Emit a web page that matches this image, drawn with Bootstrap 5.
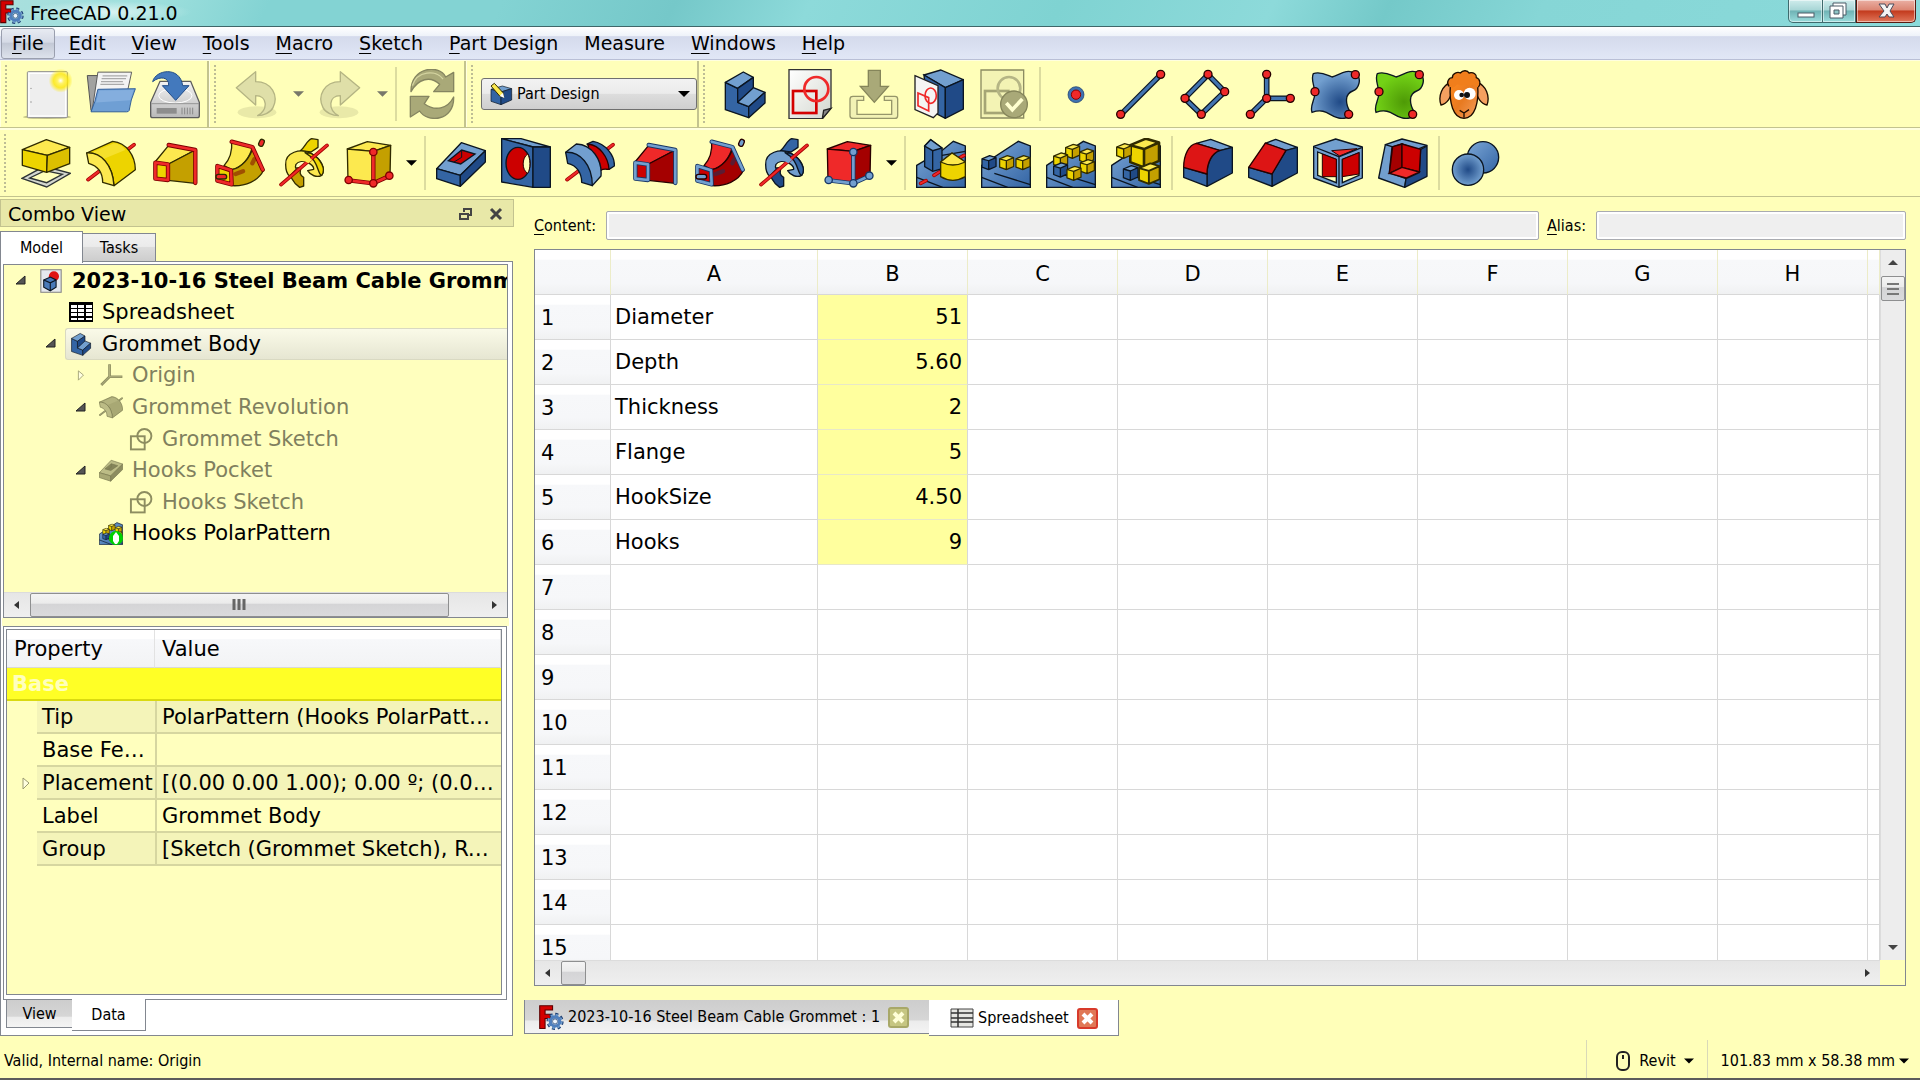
<!DOCTYPE html>
<html lang="en">
<head>
<meta charset="utf-8">
<meta name="viewport" content="width=device-width, initial-scale=1">
<title>FreeCAD 0.21.0</title>
<link href="https://cdn.jsdelivr.net/npm/bootstrap@5.3.0/dist/css/bootstrap.min.css" rel="stylesheet">
<style>
:root{--cream:#ffffb9;--line:#c3c38f;--edge:#828790}
body{background:var(--cream);color:#000;font-family:"DejaVu Sans",sans-serif;font-size:21px;line-height:30px;height:100vh;overflow:hidden}
button,input,select{font-family:inherit;color:inherit}
button{background:none;border:0;padding:0}
u{text-underline-offset:3px;text-decoration-thickness:1px}
.small-ui{font-family:"DejaVu Sans Condensed","Noto Sans",sans-serif;font-size:16px;line-height:24px}
.big-ui{font-size:19px}
svg{display:block;flex:none}

/* palettes */
.yl{--l:#fce94f;--m:#edd400;--d:#c4a000;--k:#302b00;--e:#ef2929;--ek:#7d0000}
.bl{--l:#729fcf;--m:#3465a4;--d:#204a87;--k:#0b1521;--e:#ef2929;--ek:#7d0000}
.rd{--l:#ef2929;--m:#cc0000;--d:#a40000;--k:#280000;--e:#729fcf;--ek:#173665}
.dim{--l:#bcbc86;--m:#a8a874;--d:#8d8d60;--k:#77774f;--e:#a2a274;--ek:#8a8a5f;--ro:#8a8a5f;--ri:#a2a274}
.fl{fill:var(--l);stroke:var(--k);stroke-width:4;stroke-linejoin:round}
.fm{fill:var(--m);stroke:var(--k);stroke-width:4;stroke-linejoin:round}
.fd{fill:var(--d);stroke:var(--k);stroke-width:4;stroke-linejoin:round}
.eo{fill:none;stroke:var(--ek);stroke-width:13;stroke-linejoin:round;stroke-linecap:round}
.ei{fill:none;stroke:var(--e);stroke-width:8;stroke-linejoin:round;stroke-linecap:round}
.eb{fill:var(--e);stroke:var(--ek);stroke-width:4}
.ro{fill:none;stroke:var(--ro,#a40000);stroke-width:11;stroke-linecap:round}
.ri{fill:none;stroke:var(--ri,#ef2929);stroke-width:6;stroke-linecap:round}
.bo{fill:none;stroke:#0b1521;stroke-width:17;stroke-linejoin:round}
.bi{fill:none;stroke:#4274b0;stroke-width:10;stroke-linejoin:round}
.pt{fill:#ef2929;stroke:#280000;stroke-width:4}

/* window frame */
.titlebar{height:26px;background:linear-gradient(115deg,#a9dfdd 0,#9ee0dd 8%,#83d3d3 14%,#83d3d3 26%,#75c8c9 35%,#8ddada 42%,#7fd3d2 55%,#8ddada 66%,#74c9c9 72%,#86d6d6 80%,#8adada 100%)}
.title-glow{background:radial-gradient(closest-side,rgba(225,246,245,.9),rgba(225,246,245,0));padding:3px 14px 0 6px}
.winbtn{height:23px;border:1px solid #3f6a6d;border-top:0;background:linear-gradient(#cfecec,#a8d6d6 45%,#6fb3b5 50%,#9adcdc);box-shadow:inset 0 0 0 1px rgba(255,255,255,.5)}
.win-min{width:35px;border-radius:0 0 0 5px}
.win-max{width:33px;border-left:0}
.win-close{width:60px;border-radius:0 0 5px 0;border-color:#5a1a10;background:linear-gradient(#eab0a4,#dc8673 45%,#c33a1d 50%,#e0765a)}
.menubar{height:34px;border-top:1px solid #3f6669;border-bottom:1px solid #b9bfd6;background:linear-gradient(#fff 0,#eef2f9 28%,#d4daec 30%,#e1e7f6 100%)}
.menubar a{color:#000;text-decoration:none;padding:0 13px;line-height:29px;border:1px solid transparent;border-width:1px 0;border-radius:3px}
.menubar a.hot{border:1px solid #9a9fae;background:linear-gradient(#e8ebf2,#d5dae6 45%,#c3c9d6 50%,#dde2ec);padding:0 10px;margin:0 1px}

/* toolbars */
.toolrow{border-bottom:1px solid var(--line)}
.tb-one{height:68px;border-top:1px solid #ffffdf}
.tb-two{height:69px;border-top:2px solid #ffffdf}
.tgroup{border-right:2px solid var(--line);border-left:1px solid #ffffdf}
.grip{width:2px;height:58px;margin:0 8px 0 4px;background:repeating-linear-gradient(#bdbd95 0 2px,transparent 2px 4px)}
.tool{width:64px;height:60px;display:flex;align-items:center;justify-content:center;flex:none}
.tool svg{width:50px;height:50px}
.run4,.run5,.run6,.run7{display:flex}
.run4{width:259px}.run5{width:323px}.run6{width:387px}.run7{width:452px}
.run4 .tool,.run5 .tool,.run6 .tool,.run7 .tool{flex:1 1 0;width:auto}
.vsep{width:2px;height:54px;background:#dcdc9f;flex:none;margin:0 3px}
.drop{width:20px;display:flex;justify-content:center}
.wb{width:216px;height:32px}
.wb select{appearance:none;width:100%;height:32px;border:1px solid #707070;border-radius:3px;background:linear-gradient(#f2f2f2,#ebebeb 48%,#dddddd 50%,#cfcfcf);padding:0 30px 0 35px}
.wb .wb-icon{left:8px;top:4px}
.wb .wb-arrow{right:7px;top:13px}

/* left dock */
.dock{width:515px;padding-top:2px}
.dock-title{height:28px;background:#e8e8a8;border:1px solid var(--line);margin-right:1px;padding:1px 10px 0 7px}
.dock-tab{border:1px solid var(--edge);border-bottom:0}
.grey-tab{background:linear-gradient(#f1f1f1,#ebebeb 46%,#dcdcdc 50%,#cdcdcd)}
.grey-tab-down{background:linear-gradient(#cdcdcd,#d6d6d6 60%,#ececec 64%,#f4f4f4)}
.tab-model{width:83px;height:32px;background:#fff;margin-bottom:-2px;z-index:1}
.tab-tasks{width:73px;height:28px;border-left:0}
.pane{border:1px solid var(--edge);background:#fff;margin-right:2px;padding:2px 4px 4px 2px}
.treebox{height:354px;border:1px solid var(--edge);background:#ffffbe}
.tree{height:284px;margin-left:1px}
.tree-row{white-space:nowrap;display:flex;align-items:center;flex:1 1 0;min-height:0;overflow:hidden}
.tree-row svg{width:24px;height:24px;margin-right:5px}
.tree-row svg.twig{width:11px;height:11px;margin-right:13px}
.ghost{color:#80805e}
.lv1{padding-left:10px}.lv1 svg{margin-right:9px}.lv2{padding-left:64px}.lv2t{padding-left:40px}.lv3t{padding-left:70px}.lv3{padding-left:94px}.lv4{padding-left:124px}
.picked{background:linear-gradient(#fafae8,#e6e6d2);border:1px solid #d9d9c2;border-right:0;border-radius:3px 0 0 3px;flex:1;align-self:stretch;display:flex;align-items:center;padding-left:3px;margin-left:-4px}
.hbar{height:25px;background:linear-gradient(#e6e6e6,#efefef);border-top:1px solid #dcdcdc}
.thumb{border:1px solid #8e8f90;border-radius:2px;background:linear-gradient(#f4f4f4,#ebebeb 42%,#d4d4d6 46%,#dadadc)}
.split{height:8px;background:#ffffc6;margin:0 -1px}
.props-outer{border:1px solid var(--edge);padding:2px 4px 4px 2px;margin-right:1px}
.props-inner{border:1px solid var(--edge);background:#ffffbe;overflow:hidden}
.proptable{width:100%;table-layout:fixed;border-collapse:separate;border-spacing:0;line-height:28px}
.proptable th,.proptable td{padding:0 5px;white-space:nowrap;overflow:hidden;text-overflow:ellipsis;font-weight:400}
.proptable thead th{height:38px;background:linear-gradient(#fff 24%,#f7f8fa 26%,#f2f3f5);border-bottom:1px solid #d8d8d8;border-right:1px solid #e2e2e2;padding-left:7px}
.proptable tbody td,.proptable tbody th{height:33px;border-bottom:2px solid #d6d6a0}
.proptable tbody td+td,.proptable tbody th+td{border-left:2px solid #d6d6a0}
.proptable .twigcell{border:0!important;padding:0 0 0 13px}
.proptable .alt{background:#f4f4b9}
.proptable .basecell{background:#ffff26;color:#ffffbe;font-weight:700;border-bottom-color:#dada10!important}
.tab-view{width:66px;height:28px;border:1px solid var(--edge);border-top:0;border-right:0;margin-left:3px}
.tab-data{width:74px;height:32px;border:1px solid var(--edge);border-top:0;border-left:0;background:#fff;margin-top:-1px}

/* spreadsheet */
.sheetpane{padding:14px 14px 0 19px}
.field{height:29px;border:1px solid #a9abb0;border-radius:2px;background:#efefef;box-shadow:inset 0 0 0 2px #fff;min-width:0;margin-left:10px}
.alias-field{width:310px}
.sheetbox{border:1px solid var(--edge);margin-top:9px;min-height:0;background:#fff}
.sheet{width:100%;table-layout:fixed;border-collapse:separate;border-spacing:0}
.sheet th,.sheet td{height:45px;padding:0 5px 0 4px;border-right:1px solid #d8d8d8;border-bottom:1px solid #d8d8d8;font-weight:400;white-space:nowrap}
.sheet thead th{text-align:center;background:linear-gradient(#fff 21%,#f7f8fa 23%,#f6f7f9 75%,#f0f1f2);border-right-color:#ececc8;padding:3px 0 0}
.sheet tbody th{background:linear-gradient(#fff 21%,#f7f8fa 23%,#f6f7f9 75%,#f0f1f2);padding:1px 0 0 6px}
.sheet .val{background:#ffff9e;text-align:right;border-bottom-color:#e8e8c8}
.vbar{width:25px;background:#ededed;border-left:1px solid #dcdcdc}
.docs{margin:14px 0 0 -10px}
.doc-one{width:405px;height:34px;border-left:1px solid var(--edge);border-bottom:1px solid var(--edge);padding:1px 0 0 14px}
.doc-two{width:190px;height:36px;background:#fff;border-right:1px solid var(--edge);border-bottom:1px solid var(--edge);padding:1px 0 0 21px}
.statusbar{height:42px}
.statusbar>span:first-child,.statusbar button{padding-top:7px}
.nav-style{padding:0 13px 0 24px}
.view-size{padding:0 11px 0 13px}
.stsep{width:1px;height:38px;background:#d9d9b8;align-self:flex-end}
.taskedge{height:2px;background:#5c5c5c}
</style>
<script src="https://cdn.jsdelivr.net/npm/bootstrap@5.3.0/dist/js/bootstrap.bundle.min.js"></script>
</head>
<body class="d-flex flex-column">

<svg width="0" height="0" class="position-absolute" aria-hidden="true">
<defs>
<linearGradient id="gBlue" x1="0" y1="0" x2="1" y2="1"><stop offset="0" stop-color="#7ba6d6"/><stop offset="1" stop-color="#3465a4"/></linearGradient>
<linearGradient id="gDisk" x1="0" y1="0" x2="0" y2="1"><stop offset="0" stop-color="#f4f4f4"/><stop offset="1" stop-color="#b8b8b8"/></linearGradient>
<linearGradient id="gPage" x1="0" y1="0" x2="1" y2="1"><stop offset="0" stop-color="#fff"/><stop offset="1" stop-color="#d3d7cf"/></linearGradient>
<radialGradient id="gSun"><stop offset="0" stop-color="#fff"/><stop offset=".25" stop-color="#fff36a"/><stop offset=".6" stop-color="#ffe900" stop-opacity=".8"/><stop offset="1" stop-color="#ffe900" stop-opacity="0"/></radialGradient>
<radialGradient id="gBall"><stop offset="0" stop-color="#204a87"/><stop offset="1" stop-color="#729fcf"/></radialGradient>
<radialGradient id="gLeaf" cx=".6" cy=".65" r=".6"><stop offset="0" stop-color="#4e9a06"/><stop offset="1" stop-color="#73d216"/></radialGradient>
<radialGradient id="gSea" cx=".6" cy=".65" r=".6"><stop offset="0" stop-color="#204a87"/><stop offset="1" stop-color="#729fcf"/></radialGradient>
<linearGradient id="gWool" x1="0" y1="0" x2="1" y2="1"><stop offset="0" stop-color="#ff8a1e"/><stop offset=".5" stop-color="#e87a20"/><stop offset="1" stop-color="#f5a060"/></linearGradient>
</defs>
<symbol id="logo" viewBox="0 0 70 70"><path fill="#d40000" stroke="#5a0000" stroke-width="3" d="M2 2H38V14H17V26H32V38H17V66H2Z"/><circle cx="45" cy="46" r="19" fill="none" stroke="#1d3f73" stroke-width="10" stroke-dasharray="8 6.9"/><circle cx="45" cy="46" r="18" fill="none" stroke="#729fcf" stroke-width="6" stroke-dasharray="7 7.1"/><circle cx="45" cy="46" r="13" fill="none" stroke="#4f7fbd" stroke-width="9"/><circle cx="45" cy="46" r="7" fill="#eef4fb" stroke="#1d3f73" stroke-width="2"/></symbol>
<symbol id="new" viewBox="0 0 150 150"><ellipse cx="75" cy="144" rx="72" ry="6" fill="#8a8a50" opacity=".5"/><rect x="16" y="8" width="120" height="138" rx="3" fill="#eee" stroke="#8c8c8c" stroke-width="3"/><rect x="21" y="13" width="110" height="128" fill="none" stroke="#fff" stroke-width="4"/><circle cx="27" cy="58" r="2" fill="#888"/><circle cx="27" cy="99" r="2" fill="#888"/><circle cx="116" cy="35" r="36" fill="url(#gSun)"/></symbol>
<symbol id="open" viewBox="0 0 160 150"><path d="M4 16H40L60 128H16Z" fill="#a2a2a0" stroke="#4d4d4d" stroke-width="3"/><path d="M38 5H146L132 70 40 118 20 126Z" fill="#f3f3f3" stroke="#555" stroke-width="3"/><path d="M53 17H132M50 26H128M48 35H118M46 44H122" stroke="#aaa" stroke-width="4"/><path d="M38 60L158 58 Q142 95 138 128 Q136 132 130 132H16Q30 100 38 60Z" fill="#6f9fd4" stroke="#2b5a97" stroke-width="3"/><path d="M42 64L152 62 Q145 85 142 95 L32 102Z" fill="#8db5e2" opacity=".7"/></symbol>
<symbol id="save" viewBox="0 0 150 150"><path d="M30 37H122L148 100V140Q148 146 142 146H8Q2 146 2 140V100Z" fill="url(#gDisk)" stroke="#5c5c5c" stroke-width="4"/><ellipse cx="76" cy="80" rx="50" ry="22" fill="none" stroke="#fff" stroke-width="3"/><path d="M5 104H146" stroke="#777" stroke-width="2"/><rect x="20" y="117" width="60" height="17" fill="#8d8d8d"/><path d="M96 116V136M104 116V136M112 116V136M120 116V136M128 116V136" stroke="#888" stroke-width="3"/><path d="M8 38C16 2 90-10 98 50H117L77 94 37 50H56C58 24 30 20 8 38Z" fill="#4379bd" stroke="#1f4c88" stroke-width="3"/></symbol>
<symbol id="undo" viewBox="0 0 150 150"><ellipse cx="78" cy="130" rx="58" ry="18" fill="#b5b580" opacity=".3"/><path d="M16 56L74 8V38C122 38 144 80 126 116C118 132 96 140 80 140C112 122 110 80 74 80V108Z" fill="#dfdfa8" stroke="#b4b483" stroke-width="4" stroke-linejoin="round"/></symbol>
<symbol id="refresh" viewBox="0 0 150 150"><path d="M12 68C10 -6 96 -16 116 24L140 10V68H80L98 46C70 20 34 28 12 68ZM140 84C142 158 60 162 38 126L10 144V82H66L52 104C84 128 122 120 140 84Z" fill="#a9a978" stroke="#858560" stroke-width="4" stroke-linejoin="round"/><path d="M16 50C30 4 88 2 108 30" fill="none" stroke="#d4d4a0" stroke-width="4"/></symbol>
<symbol id="body" viewBox="0 0 150 150"><path class="fm" d="M16 40L53 58V100L86 113V146L16 122Z"/><path class="fl" d="M16 40L70 9 100 25 53 58Z"/><path class="fd" d="M53 58L100 25V60L53 100Z"/><path class="fl" d="M53 100L100 56 135 70 86 113Z"/><path class="fd" d="M86 113L135 70V102L86 146Z"/></symbol>
<symbol id="shapes" viewBox="0 0 150 150"><rect x="12" y="58" width="86" height="82" fill="none" stroke="var(--d)" stroke-width="12"/><circle cx="96" cy="56" r="44" fill="none" stroke="var(--d)" stroke-width="12"/></symbol>
<symbol id="sketch" viewBox="0 0 150 150"><path d="M12 2H138V118L112 149H12Z" fill="url(#gPage)" stroke="#333" stroke-width="4"/><path d="M138 118L112 149 116 124Z" fill="#888" stroke="#222" stroke-width="4"/><rect x="24" y="66" width="70" height="66" fill="none" stroke="#d40000" stroke-width="8"/><circle cx="94" cy="60" r="36" fill="none" stroke="#ef2929" stroke-width="8"/></symbol>
<symbol id="import" viewBox="0 0 150 150"><path d="M14 82H44V94H24V136H128V94H106V82H138Q146 82 146 90V140Q146 148 138 148H12Q3 148 3 140V90Q3 82 12 82Z" fill="#f2f2b4" stroke="#96966a" stroke-width="4"/><path d="M58 4H94V52H118L76 100 34 52H58Z" fill="#a9a978" stroke="#85855a" stroke-width="4"/></symbol>
<symbol id="mapsk" viewBox="0 0 150 150"><path d="M30 18L80 3 148 32 94 56Z" fill="#729fcf" stroke="#0b1521" stroke-width="4"/><path d="M30 18L94 56V148L40 120Z" fill="#3465a4" stroke="#0b1521" stroke-width="4"/><path d="M94 56L148 32V120L94 148Z" fill="#204a87" stroke="#0b1521" stroke-width="4"/><path d="M3 20L72 50V132L58 146 3 122Z" fill="#f5f5f3" stroke="#222" stroke-width="4"/><path d="M12 72L44 86V126L12 110Z" fill="none" stroke="#ef2929" stroke-width="5"/><ellipse cx="50" cy="80" rx="17" ry="23" fill="none" stroke="#ef2929" stroke-width="5"/></symbol>
<symbol id="valid" viewBox="0 0 150 150"><path d="M6 3H134V147H6Z" fill="#f3f3b4" stroke="#8c8c62" stroke-width="4"/><rect x="18" y="66" width="70" height="66" fill="none" stroke="#a5a575" stroke-width="8"/><circle cx="90" cy="58" r="34" fill="none" stroke="#b5b585" stroke-width="8"/><circle cx="105" cy="106" r="40" fill="#a9a978" stroke="#85855a" stroke-width="4"/><path d="M82 102L100 122 130 90" fill="none" stroke="#ffffd0" stroke-width="11"/></symbol>
<symbol id="point" viewBox="0 0 150 150"><circle cx="75" cy="77" r="24" fill="#3f72b0" stroke="#173665" stroke-width="2"/><circle cx="75" cy="77" r="14" fill="#ef2929" stroke="#8a0000" stroke-width="3"/></symbol>
<symbol id="seg" viewBox="0 0 150 150"><path class="bo" d="M14 137L134 17"/><path class="bi" d="M14 137L134 17"/><circle class="pt" cx="14" cy="136" r="12"/><circle class="pt" cx="134" cy="16" r="12"/></symbol>
<symbol id="poly" viewBox="0 0 150 150"><path class="bo" d="M84 17L134 68 64 136 14 88Z"/><path class="bi" d="M84 17L134 68 64 136 14 88Z"/><circle class="pt" cx="84" cy="16" r="12"/><circle class="pt" cx="134" cy="68" r="12"/><circle class="pt" cx="64" cy="136" r="12"/><circle class="pt" cx="15" cy="88" r="12"/></symbol>
<symbol id="axes" viewBox="0 0 150 150"><path class="bo" d="M65 17V88L15 137M65 88H135"/><path class="bi" d="M65 17V88L15 137M65 88H135"/><circle class="pt" cx="65" cy="16" r="12"/><circle class="pt" cx="136" cy="88" r="12"/><circle class="pt" cx="65" cy="88" r="12"/><circle class="pt" cx="16" cy="136" r="12"/></symbol>
<symbol id="origin" viewBox="0 0 150 150"><path d="M66 8V86L14 138M66 86H146" fill="none" stroke="#8f8f62" stroke-width="17"/><path d="M66 12V86L16 136M66 86H142" fill="none" stroke="#c6c690" stroke-width="4"/></symbol>
<symbol id="blob" viewBox="0 0 150 150"><path d="M10 14C32 6 50 18 66 24C88 18 108 -2 136 12C158 28 146 60 128 66C106 74 104 100 120 128C126 146 100 152 82 146C58 140 46 116 6 130C-2 108 18 90 14 68C12 44 2 30 10 14Z" fill="var(--blob)" stroke="#0b1521" stroke-width="4"/><circle class="pt" cx="136" cy="17" r="12"/><circle class="pt" cx="15" cy="68" r="12"/><circle class="pt" cx="116" cy="136" r="12"/></symbol>
<symbol id="sheep" viewBox="0 0 150 150"><path d="M34 40C10 50-4 80 6 108C24 104 38 84 40 62ZM116 40C140 50 154 80 144 108C126 104 112 84 110 62Z" fill="#f5a060" stroke="#1c0c00" stroke-width="4"/><path d="M34 50C34 20 116 20 116 50C120 100 108 148 75 148C42 148 30 100 34 50Z" fill="url(#gWool)" stroke="#1c0c00" stroke-width="4"/><path d="M30 52C20 40 30 26 40 26C40 12 56 8 64 12C72 2 86 4 90 12C104 8 114 18 112 26C124 30 126 46 118 54C108 58 104 46 98 48C90 56 84 44 76 46C66 54 60 46 54 46C46 58 38 58 30 52Z" fill="#f07e1c"/><path d="M30 52C20 40 30 26 40 26C40 12 56 8 64 12C72 2 86 4 90 12C104 8 114 18 112 26C124 30 126 46 118 54" fill="none" stroke="#1c0c00" stroke-width="4"/><circle cx="60" cy="78" r="15" fill="#fff"/><circle cx="92" cy="74" r="18" fill="#fff"/><circle cx="68" cy="78" r="7" fill="#111"/><circle cx="84" cy="78" r="9" fill="#111"/><path d="M62 124L75 132 90 122M75 132V146" fill="none" stroke="#1c0c00" stroke-width="4"/></symbol>

<symbol id="pad" viewBox="0 0 150 150"><path fill-rule="evenodd" d="M3 121L70 85 148 106 77 147ZM26 120L77 134 124 109 72 98Z" fill="#d3d7cf" stroke="#2e3436" stroke-width="4"/><path class="fl" d="M4 35L76 5 146 28 79 52Z"/><path class="fm" d="M4 35L79 52 77 103 4 82Z"/><path class="fd" d="M79 52L146 28V77L77 103Z" style="fill:#dcbf00"/></symbol>
<symbol id="rev" viewBox="0 0 150 150"><path class="ro" d="M6 125L144 20"/><path class="ri" d="M6 125L144 20"/><path class="fm" d="M2 45L80 10C122 14 148 54 148 95L84 143C80 80 45 42 2 45Z"/><path d="M20 42L84 16C104 18 112 28 118 36L54 62Z" fill="var(--l)" opacity=".55"/><path class="fl" d="M2 45C45 42 80 80 84 143L50 133C50 106 36 84 8 76Z"/></symbol>
<symbol id="loft" viewBox="0 0 150 150"><path class="fl" d="M15 72L56 22 136 36 56 78Z"/><path class="fd" d="M56 78L136 36V136L54 127Z"/><path class="eo" d="M56 21L136 36V135"/><path class="ei" d="M56 21L136 36V135"/><path class="fm" d="M16 74L54 79V126L16 122Z"/><path class="eo" d="M16 74L54 79V126L16 122Z"/><path class="ei" d="M16 74L54 79V126L16 122Z"/></symbol>
<symbol id="pipe" viewBox="0 0 150 150"><path class="fl" d="M27 83C48 60 52 35 50 10L112 26C105 60 80 90 50 95Z"/><path class="fd" d="M50 95C80 90 105 60 114 28L146 96C130 130 90 145 52 143Z"/><path d="M62 108L84 100M112 76L118 64" stroke="var(--ek)" stroke-width="13" stroke-linecap="round" opacity=".5"/><path class="eo" d="M50 11L112 27 143 95"/><path class="ei" d="M50 11L112 27 143 95"/><path class="fm" d="M7 84L48 97 50 139 7 128Z"/><path class="eo" d="M7 84L48 97 50 139 7 128Z"/><path class="ei" d="M7 84L48 97 50 139 7 128Z"/><path d="M10 116H28M138 18L141 11" stroke="var(--k)" stroke-width="18" stroke-linecap="round"/><path d="M10 116H28M138 18L141 11" stroke="var(--e)" stroke-width="10" stroke-linecap="round"/></symbol>
<symbol id="helix" viewBox="0 0 150 150"><path class="fm" d="M64 38C80 26 82 8 98 2L117 5V28L96 42Z"/><path class="fd" d="M38 92C28 112 42 134 62 148L74 144V118C62 112 62 104 66 88Z"/><path class="fl" d="M20 80C18 42 64 30 96 46C126 62 142 94 128 112C114 120 94 112 86 98L104 94C106 84 86 68 66 70C50 72 46 84 52 94L32 114C22 106 20 94 20 80Z"/><path class="fm" d="M96 46C126 62 142 94 128 112C116 112 120 66 78 44Z"/><path class="ro" d="M6 140L144 22"/><path class="ri" d="M6 140L144 22"/><path class="fl" d="M34 58C48 44 78 44 100 66L88 76C76 66 58 66 50 78Z" style="stroke-width:0"/></symbol>
<symbol id="prim" viewBox="0 0 150 150"><path class="fl" d="M10 33L70 11 140 22 88 40Z"/><path class="fl" d="M10 33L88 40V136L12 127Z"/><path class="fd" d="M88 40L140 22 138 115 88 136Z"/><path class="eo" d="M14 127L88 136 136 114M88 42V136"/><path class="ei" d="M14 127L88 136 136 114M88 42V136"/><g class="eb"><circle cx="14" cy="126" r="11"/><circle cx="88" cy="136" r="11"/><circle cx="136" cy="113" r="11"/><circle cx="88" cy="42" r="11"/></g></symbol>
<symbol id="pocket" viewBox="0 0 150 150"><path class="fl" d="M2 92L76 14 148 38 73 112Z"/><path class="fm" d="M2 92L73 112V145L2 122Z"/><path class="fd" d="M73 112L148 38V72L73 145Z"/><path d="M37 68L77 36 117 48 74 78Z" fill="var(--hole,#cc0000)" stroke="var(--k)" stroke-width="4"/><path d="M77 36V58L54 72" fill="none" stroke="var(--k)" stroke-width="3"/></symbol>
<symbol id="hole" viewBox="0 0 150 150"><path class="fl" d="M2 2H60L148 27H96Z"/><path class="fm" d="M2 2L96 27V148L2 132Z"/><path class="fd" d="M96 27H148V148H96Z"/><ellipse cx="51" cy="76" rx="36" ry="48" fill="#cc0000" stroke="#0b1521" stroke-width="4"/><path d="M80 48C62 60 62 96 80 106C90 92 88 60 80 48Z" fill="#ffffb9" stroke="#280000" stroke-width="3"/></symbol>
<symbol id="groove" viewBox="0 0 150 150"><path class="ro" d="M6 125L144 20"/><path class="ri" d="M6 125L144 20"/><path class="fm" d="M66 18L84 10C122 16 150 54 148 84L132 94Z"/><path d="M46 44C64 42 74 32 70 18C104 22 130 58 132 94C120 94 112 90 100 104Z" fill="#cc0000" stroke="#280000" stroke-width="4"/><path class="fl" d="M2 43L34 18C82 20 112 66 108 114L82 143Z"/><path class="fm" d="M2 43C45 40 82 80 82 143L50 133C50 106 36 82 8 76Z"/></symbol>
<symbol id="cb" viewBox="0 0 50 50"><path d="M3 13L27 3 47 9 24 19Z" fill="var(--l)"/><path d="M3 13L24 19V47L3 39Z" fill="var(--m)"/><path d="M24 19L47 9V37L24 47Z" fill="var(--d)"/><path d="M3 13L27 3 47 9V37L24 47 3 39ZM3 13L24 19 47 9M24 19V47" fill="none" stroke="var(--k)" stroke-width="4" stroke-linejoin="round"/></symbol>
<symbol id="ground" viewBox="0 0 150 150"><path d="M2 82L112 10 148 24V148H2Z" fill="url(#gBlue)" stroke="#0b1521" stroke-width="4"/><path d="M2 118L80 148M40 106L148 140" fill="none" stroke="#0b1521" stroke-width="4"/></symbol>
<symbol id="mirror" viewBox="0 0 150 150"><path d="M2 82L26 68 80 36 112 10 148 24V148H2Z" fill="url(#gBlue)" stroke="#0b1521" stroke-width="4"/><path d="M2 118L80 148M78 52L148 40" fill="none" stroke="#0b1521" stroke-width="4"/><path class="ro" d="M14 136L30 128M54 112L70 102M130 60L144 52"/><path class="ri" d="M14 136L30 128M54 112L70 102M130 60L144 52"/><path d="M26 24L44 5 78 30V92L50 100 26 86Z" fill="#3465a4" stroke="#0b1521" stroke-width="4"/><path d="M26 24L44 5 78 30 50 38Z" fill="#729fcf" stroke="#0b1521" stroke-width="4"/><path d="M50 38V98" fill="none" stroke="#0b1521" stroke-width="4"/><path d="M74 72L108 45 148 72V116Q110 138 74 116Z" fill="#edd400" stroke="#302b00" stroke-width="4"/><path d="M74 72Q110 90 148 72L108 45Z" fill="#fce94f" stroke="#302b00" stroke-width="4"/></symbol>
<symbol id="linpat" viewBox="0 0 150 150"><use href="#ground"/><use class="bl" href="#cb" x="0" y="50" width="48" height="48"/><use class="yl" href="#cb" x="53" y="50" width="48" height="48"/><use class="yl" href="#cb" x="102" y="50" width="48" height="48"/></symbol>
<symbol id="polpat" viewBox="0 0 150 150"><use href="#ground"/><use class="yl" href="#cb" x="56" y="16" width="48" height="48"/><use class="yl" href="#cb" x="98" y="30" width="48" height="48"/><use class="yl" href="#cb" x="20" y="42" width="48" height="48"/><use class="yl" href="#cb" x="100" y="62" width="48" height="48"/><use class="bl" href="#cb" x="20" y="72" width="48" height="48"/><use class="yl" href="#cb" x="60" y="82" width="48" height="48"/></symbol>
<symbol id="multi" viewBox="0 0 150 150"><use href="#ground"/><use class="yl" href="#cb" x="50" y="-4" width="102" height="98"/><use class="yl" href="#cb" x="14" y="14" width="50" height="50"/><use class="bl" href="#cb" x="34" y="80" width="50" height="50"/><use class="yl" href="#cb" x="80" y="72" width="70" height="70"/></symbol>
<symbol id="fillet" viewBox="0 0 150 150"><path class="fl" d="M40 16L83 4 148 28 110 38Z"/><path class="fd" d="M72 145V108C72 72 90 44 110 38L148 28V105Z"/><path class="fm" d="M2 88L72 108V145L2 118Z"/><path d="M2 88C2 50 18 20 40 16L110 37C86 46 72 74 72 108Z" fill="#dd1515" stroke="#280000" stroke-width="4"/></symbol>
<symbol id="chamfer" viewBox="0 0 150 150"><path class="fl" d="M52 16L83 4 148 28 114 38Z"/><path class="fd" d="M72 145V108L114 37 148 28V105Z"/><path class="fm" d="M2 88L72 108V145L2 118Z"/><path d="M2 88L52 15 114 37 72 108Z" fill="#dd1515" stroke="#280000" stroke-width="4"/></symbol>
<symbol id="draft" viewBox="0 0 150 150"><path class="fl" d="M2 25L68 3 148 27 148 120 78 148 2 120Z"/><path d="M14 42L70 64V134L14 112Z" fill="#ffffb9" stroke="#0b1521" stroke-width="4"/><path d="M88 64L138 44V112L88 134Z" fill="#ffffb9" stroke="#0b1521" stroke-width="4"/><path d="M28 48L70 64V116H28ZM88 64L138 44V108L88 116Z" fill="#cc0000" stroke="#280000" stroke-width="3"/><path d="M56 38L132 32 80 54Z" fill="#ef2929" stroke="#280000" stroke-width="3"/><path d="M4 27L78 56 146 29M78 56V148" fill="none" stroke="#0b1521" stroke-width="4"/></symbol>
<symbol id="thick" viewBox="0 0 150 150"><path class="fl" d="M22 20L72 3 147 22 118 34 72 18 40 28Z"/><path class="fl" d="M22 20L42 26 34 104 84 122 80 148 2 120Z"/><path class="fd" d="M84 122L124 104 128 34 147 24V115L80 148Z"/><path d="M44 26L72 18V88L34 106Z" fill="#a40000" stroke="#280000" stroke-width="4"/><path d="M72 18L128 34 124 102 72 88Z" fill="#cc0000" stroke="#280000" stroke-width="4"/><path d="M34 106L72 88 124 102 84 120Z" fill="#ef2929" stroke="#280000" stroke-width="4"/></symbol>
<symbol id="boole" viewBox="0 0 150 150"><circle cx="99" cy="58" r="47" fill="url(#gBlue)" stroke="#0b1521" stroke-width="4"/><circle cx="54" cy="95" r="47" fill="url(#gBall)" stroke="#0b1521" stroke-width="4"/></symbol>
<symbol id="wbico" viewBox="0 0 72 72"><path d="M6 22L40 12 68 20 36 30Z" fill="#729fcf" stroke="#0b1521" stroke-width="2"/><path d="M6 22L36 30V68L6 58Z" fill="#3465a4" stroke="#0b1521" stroke-width="2"/><path d="M36 30L68 20V54L36 68Z" fill="#204a87" stroke="#0b1521" stroke-width="2"/><path d="M6 12L16 4 42 32 44 46 32 42Z" fill="#fce94f" stroke="#302b00" stroke-width="3"/><path d="M32 42L42 32 46 48Z" fill="#fff"/></symbol>
<symbol id="docico" viewBox="0 0 60 66"><rect x="2" y="2" width="56" height="62" fill="#e6e9ee" stroke="#888" stroke-width="3"/><circle cx="38" cy="20" r="14" fill="#e01515"/><path d="M10 30L28 22 44 30V50L28 60 10 50Z" fill="#4a7ab8" stroke="#0b1521" stroke-width="3"/><path d="M10 30L28 38 44 30M28 38V60" fill="none" stroke="#0b1521" stroke-width="3"/></symbol>
<symbol id="gridico" viewBox="0 0 24 24"><path d="M0 2H24V22H0Z"/><path d="M2 5H8V8H2ZM9 5H15V8H9ZM17 5H23V8H17ZM2 9H8V12H2ZM9 9H15V12H9ZM17 9H23V12H17ZM2 13H8V16H2ZM9 13H15V16H9ZM17 13H23V16H17ZM2 18H8V20H2ZM9 18H15V20H9ZM17 18H23V20H17Z" fill="#fff"/></symbol>
<symbol id="twigopen" viewBox="0 0 11 11"><path d="M10 1V9H1Z" fill="#555" stroke="#222"/></symbol>
<symbol id="twigshut" viewBox="0 0 11 13"><path d="M3 1V12L9 6Z" fill="#ffffe0" stroke="#9a9a70"/></symbol>
<symbol id="dn" viewBox="0 0 12 6"><path d="M0 0H12L6 6Z"/></symbol>
</svg>

<header>
  <div class="titlebar d-flex align-items-start justify-content-between">
    <div class="d-flex align-items-center">
      <svg width="24" height="24"><use href="#logo"/></svg>
      <span class="title-glow big-ui lh-1">FreeCAD 0.21.0</span>
    </div>
    <div class="d-flex me-1">
      <button class="winbtn win-min" aria-label="Minimize"><svg width="33" height="22"><rect x="9" y="13" width="16" height="4" fill="#fff" stroke="#4a5a66"/></svg></button>
      <button class="winbtn win-max" aria-label="Restore"><svg width="32" height="22"><path d="M10 3H23V15H10Z" fill="#fff" stroke="#4a5a66"/><path d="M7 6H20V18H7Z" fill="#fff" stroke="#4a5a66"/><path d="M11 10H16V14H11Z" fill="#8fc6c7" stroke="#4a5a66"/></svg></button>
      <button class="winbtn win-close" aria-label="Close"><svg width="58" height="22"><path d="M22 4H28L30 8 32 4H37L33 11 37 17H32L30 14 28 17H22L27 11Z" fill="#f4f4f4" stroke="#4a4a5a"/></svg></button>
    </div>
  </div>
  <nav class="menubar big-ui d-flex align-items-center" aria-label="Main menu">
    <a class="hot" href="#"><u>F</u>ile</a><a href="#"><u>E</u>dit</a><a href="#"><u>V</u>iew</a><a href="#"><u>T</u>ools</a><a href="#"><u>M</u>acro</a><a href="#"><u>S</u>ketch</a><a href="#"><u>P</u>art Design</a><a href="#">Measure</a><a href="#"><u>W</u>indows</a><a href="#"><u>H</u>elp</a>
  </nav>
  <div class="toolrow tb-one d-flex">
    <div class="tgroup d-flex align-items-center">
      <span class="grip"></span>
      <button class="tool" aria-label="New"><svg><use href="#new"/></svg></button>
      <button class="tool" aria-label="Open"><svg><use href="#open"/></svg></button>
      <button class="tool" aria-label="Save"><svg><use href="#save"/></svg></button>
    </div>
    <div class="tgroup d-flex align-items-center">
      <span class="grip"></span>
      <button class="tool" aria-label="Undo"><svg><use href="#undo"/></svg></button>
      <button class="drop" aria-label="Undo list"><svg width="11" height="6" fill="#77776a"><use href="#dn"/></svg></button>
      <button class="tool" aria-label="Redo"><svg><use href="#undo" transform="matrix(-1 0 0 1 50 0)"/></svg></button>
      <button class="drop" aria-label="Redo list"><svg width="11" height="6" fill="#77776a"><use href="#dn"/></svg></button>
      <span class="vsep"></span>
      <button class="tool" aria-label="Refresh"><svg><use href="#refresh"/></svg></button>
    </div>
    <div class="tgroup d-flex align-items-center">
      <span class="grip"></span>
      <div class="wb position-relative small-ui">
        <select aria-label="Workbench"><option>Part Design</option></select>
        <svg class="wb-icon position-absolute pe-none" width="24" height="24"><use href="#wbico"/></svg>
        <svg class="wb-arrow position-absolute pe-none" width="12" height="6"><use href="#dn"/></svg>
      </div>
    </div>
    <div class="d-flex align-items-center bl">
      <span class="grip"></span>
      <div class="run5">
        <button class="tool" aria-label="Create body"><svg><use href="#body"/></svg></button>
        <button class="tool" aria-label="Create sketch"><svg><use href="#sketch"/></svg></button>
        <button class="tool" aria-label="Edit sketch"><svg><use href="#import"/></svg></button>
        <button class="tool" aria-label="Map sketch"><svg><use href="#mapsk"/></svg></button>
        <button class="tool" aria-label="Validate sketch"><svg><use href="#valid"/></svg></button>
      </div>
      <span class="vsep"></span>
      <div class="run7">
        <button class="tool" aria-label="Datum point"><svg><use href="#point"/></svg></button>
        <button class="tool" aria-label="Datum line"><svg><use href="#seg"/></svg></button>
        <button class="tool" aria-label="Datum plane"><svg><use href="#poly"/></svg></button>
        <button class="tool" aria-label="Coordinate system"><svg><use href="#axes"/></svg></button>
        <button class="tool" aria-label="Shape binder"><svg style="--blob:url(#gSea)"><use href="#blob"/></svg></button>
        <button class="tool" aria-label="Sub-shape binder"><svg style="--blob:url(#gLeaf)"><use href="#blob"/></svg></button>
        <button class="tool" aria-label="Clone"><svg><use href="#sheep"/></svg></button>
      </div>
    </div>
  </div>
  <div class="toolrow tb-two d-flex align-items-center">
    <span class="grip"></span>
    <div class="run6 yl">
      <button class="tool" aria-label="Pad"><svg><use href="#pad"/></svg></button>
      <button class="tool" aria-label="Revolution"><svg><use href="#rev"/></svg></button>
      <button class="tool" aria-label="Additive loft"><svg><use href="#loft"/></svg></button>
      <button class="tool" aria-label="Additive pipe"><svg><use href="#pipe"/></svg></button>
      <button class="tool" aria-label="Additive helix"><svg><use href="#helix"/></svg></button>
      <button class="tool" aria-label="Additive primitive"><svg><use href="#prim"/></svg></button>
    </div>
    <button class="drop" aria-label="Primitive list"><svg width="11" height="6"><use href="#dn"/></svg></button>
    <span class="vsep"></span>
    <div class="run7">
      <button class="tool bl" aria-label="Pocket"><svg><use href="#pocket"/></svg></button>
      <button class="tool bl" aria-label="Hole"><svg><use href="#hole"/></svg></button>
      <button class="tool bl" aria-label="Groove"><svg><use href="#groove"/></svg></button>
      <button class="tool rd" aria-label="Subtractive loft"><svg><use href="#loft"/></svg></button>
      <button class="tool rd" aria-label="Subtractive pipe"><svg><use href="#pipe"/></svg></button>
      <button class="tool bl" aria-label="Subtractive helix"><svg><use href="#helix"/></svg></button>
      <button class="tool rd" aria-label="Subtractive primitive"><svg><use href="#prim"/></svg></button>
    </div>
    <button class="drop" aria-label="Primitive list"><svg width="11" height="6"><use href="#dn"/></svg></button>
    <span class="vsep"></span>
    <div class="run4 bl">
      <button class="tool" aria-label="Mirrored"><svg><use href="#mirror"/></svg></button>
      <button class="tool" aria-label="Linear pattern"><svg><use href="#linpat"/></svg></button>
      <button class="tool" aria-label="Polar pattern"><svg><use href="#polpat"/></svg></button>
      <button class="tool" aria-label="MultiTransform"><svg><use href="#multi"/></svg></button>
    </div>
    <span class="vsep"></span>
    <div class="run4 bl">
      <button class="tool" aria-label="Fillet"><svg><use href="#fillet"/></svg></button>
      <button class="tool" aria-label="Chamfer"><svg><use href="#chamfer"/></svg></button>
      <button class="tool" aria-label="Draft"><svg><use href="#draft"/></svg></button>
      <button class="tool" aria-label="Thickness"><svg><use href="#thick"/></svg></button>
    </div>
    <span class="vsep"></span>
    <button class="tool" aria-label="Boolean"><svg><use href="#boole"/></svg></button>
  </div>
</header>

<main class="d-flex flex-fill" style="min-height:0">
  <aside class="dock d-flex flex-column flex-shrink-0">
    <div class="dock-title big-ui d-flex align-items-center">
      <span class="me-auto">Combo View</span>
      <button class="me-3" aria-label="Float"><svg width="14" height="14" fill="none" stroke="#444" stroke-width="2"><path d="M5 5V2H12V8H10M1 7H9V12H1Z"/></svg></button>
      <button aria-label="Close panel"><svg width="14" height="14" stroke="#444" stroke-width="3"><path d="M2 2L12 12M12 2L2 12"/></svg></button>
    </div>
    <div class="small-ui d-flex align-items-end pt-1">
      <button class="dock-tab tab-model position-relative">Model</button>
      <button class="dock-tab tab-tasks grey-tab">Tasks</button>
    </div>
    <div class="pane d-flex flex-column flex-fill">
      <div class="treebox d-flex flex-column flex-shrink-0">
        <div class="tree d-flex flex-column">
          <div class="tree-row lv1 fw-bold"><svg class="twig"><use href="#twigopen"/></svg><svg><use href="#docico"/></svg>2023-10-16 Steel Beam Cable Grommet</div>
          <div class="tree-row lv2"><svg><use href="#gridico"/></svg><span class="ps-1">Spreadsheet</span></div>
          <div class="tree-row lv2t"><svg class="twig"><use href="#twigopen"/></svg><div class="picked bl"><svg><use href="#body"/></svg><span class="ps-1">Grommet Body</span></div></div>
          <div class="tree-row lv3t ghost"><svg class="twig"><use href="#twigshut"/></svg><svg><use href="#origin"/></svg><span class="ps-1">Origin</span></div>
          <div class="tree-row lv3t ghost dim"><svg class="twig"><use href="#twigopen"/></svg><svg><use href="#rev"/></svg><span class="ps-1">Grommet Revolution</span></div>
          <div class="tree-row lv4 ghost dim"><svg><use href="#shapes"/></svg><span class="ps-1">Grommet Sketch</span></div>
          <div class="tree-row lv3t ghost dim"><svg class="twig"><use href="#twigopen"/></svg><svg style="--hole:#85855a"><use href="#pocket"/></svg><span class="ps-1">Hooks Pocket</span></div>
          <div class="tree-row lv4 ghost dim"><svg><use href="#shapes"/></svg><span class="ps-1">Hooks Sketch</span></div>
          <div class="tree-row lv3"><svg viewBox="0 0 24 24"><use href="#polpat" width="24" height="24"/><circle cx="17" cy="17" r="7" fill="#00d000"/><path d="M17 11L20 15V20L18 23H16L14 20V15Z" fill="#fff"/></svg><span class="ps-1">Hooks PolarPattern</span></div>
        </div>
        <div class="hbar mt-auto d-flex align-items-center">
          <svg class="mx-2" width="10" height="12"><path d="M7 2V10L2 6Z" fill="#333"/></svg>
          <div class="thumb h-100 flex-fill d-flex justify-content-center align-items-center"><svg width="16" height="12" stroke="#666" stroke-width="3"><path d="M2 0V11M7 0V11M12 0V11"/></svg></div>
          <svg class="me-2" width="50" height="12"><path d="M43 2V10L48 6Z" fill="#333"/></svg>
        </div>
      </div>
      <div class="split flex-shrink-0"></div>
      <div class="props-outer flex-fill d-flex" style="min-height:0">
        <div class="props-inner flex-fill">
          <table class="proptable">
            <colgroup><col style="width:30px"><col style="width:118px"><col></colgroup>
            <thead><tr><th colspan="2">Property</th><th>Value</th></tr></thead>
            <tbody>
              <tr><td class="basecell" colspan="3">Base</td></tr>
              <tr><td class="twigcell"></td><th class="alt">Tip</th><td class="alt">PolarPattern (Hooks PolarPattern)</td></tr>
              <tr><td class="twigcell"></td><th>Base Feature</th><td></td></tr>
              <tr><td class="twigcell"><svg width="11" height="13"><use href="#twigshut"/></svg></td><th class="alt" style="text-overflow:clip">Placement</th><td class="alt">[(0.00 0.00 1.00); 0.00 º; (0.00 mm 0.00 mm)]</td></tr>
              <tr><td class="twigcell"></td><th>Label</th><td>Grommet Body</td></tr>
              <tr><td class="twigcell"></td><th class="alt">Group</th><td class="alt">[Sketch (Grommet Sketch), Revolution]</td></tr>
            </tbody>
          </table>
        </div>
      </div>
      <div class="d-flex align-items-start small-ui">
        <button class="tab-view grey-tab-down">View</button>
        <button class="tab-data">Data</button>
      </div>
    </div>
  </aside>

  <section class="sheetpane flex-fill d-flex flex-column" style="min-width:0">
    <div class="small-ui d-flex align-items-center">
      <label for="content"><u>C</u>ontent:</label>
      <input id="content" class="field flex-fill" type="text">
      <label for="alias" class="ms-2"><u>A</u>lias:</label>
      <input id="alias" class="field alias-field" type="text">
    </div>
    <div class="sheetbox flex-fill d-flex">
      <div class="flex-fill d-flex flex-column" style="min-width:0">
        <div class="flex-fill overflow-hidden" style="min-height:0">
          <table class="sheet">
            <colgroup><col style="width:76px"><col style="width:207px"><col span="7" style="width:150px"><col></colgroup>
            <thead><tr><th></th><th>A</th><th>B</th><th>C</th><th>D</th><th>E</th><th>F</th><th>G</th><th>H</th><th></th></tr></thead>
            <tbody id="rows"></tbody>
          </table>
        </div>
        <div class="hbar d-flex align-items-center flex-shrink-0">
          <svg class="mx-2" width="10" height="12"><path d="M7 2V10L2 6Z" fill="#333"/></svg>
          <div class="thumb h-100" style="width:25px"></div>
          <svg class="ms-auto me-2" width="10" height="12"><path d="M3 2V10L8 6Z" fill="#333"/></svg>
        </div>
      </div>
      <div class="d-flex flex-column">
        <div class="vbar flex-fill d-flex flex-column align-items-center">
          <svg class="my-2" width="12" height="10"><path d="M1 7H11L6 2Z" fill="#444"/></svg>
          <div class="thumb w-100 d-flex justify-content-center align-items-center" style="height:25px"><svg width="14" height="16" stroke="#777" stroke-width="2"><path d="M1 3H13M1 8H13M1 13H13"/></svg></div>
          <svg class="mt-auto mb-2" width="12" height="10"><path d="M1 3H11L6 8Z" fill="#444"/></svg>
        </div>
        <div style="height:25px;background:#ffffb9"></div>
      </div>
    </div>
    <div class="docs small-ui d-flex align-items-start">
      <button class="doc-one grey-tab-down d-flex align-items-center"><svg class="me-1" width="25" height="25"><use href="#logo"/></svg>2023-10-16 Steel Beam Cable Grommet : 1<svg class="ms-2" width="21" height="21"><rect x="1" y="1" width="19" height="19" rx="2" fill="#c6c682" stroke="#a8a868" stroke-width="2"/><path d="M6 6L15 15M15 6L6 15" stroke="#ffffd8" stroke-width="4"/></svg></button>
      <button class="doc-two d-flex align-items-center"><svg class="me-1" width="24" height="20"><path d="M1 1H23V19H1Z" fill="#e6e6e2" stroke="#444"/><path d="M8 1V19M1 5H23M1 10H23M1 14H23" stroke="#333" stroke-width="1.5"/></svg><span>Spreadsheet</span><svg class="ms-2" width="21" height="21"><rect x="1" y="1" width="19" height="19" rx="2" fill="#e07856" stroke="#d83a2a" stroke-width="2"/><path d="M6 6L15 15M15 6L6 15" stroke="#fff" stroke-width="4"/></svg></button>
    </div>
  </section>
</main>

<footer>
  <div class="statusbar small-ui d-flex align-items-center">
    <span class="ps-1 me-auto">Valid, Internal name: Origin</span>
    <span class="stsep"></span>
    <button class="nav-style d-flex align-items-center"><svg class="me-2 ms-1" width="16" height="22"><rect x="2" y="2" width="12" height="18" rx="5" fill="none" stroke="#222" stroke-width="2"/><path d="M8 5V9" stroke="#222" stroke-width="2"/></svg>Revit<svg class="ms-2" width="10" height="6"><use href="#dn"/></svg></button>
    <span class="stsep"></span>
    <button class="view-size d-flex align-items-center">101.83 mm x 58.38 mm<svg class="ms-1" width="10" height="6"><use href="#dn"/></svg></button>
  </div>
  <div class="taskedge"></div>
</footer>

<script>
const cells = [["Diameter","51"],["Depth","5.60"],["Thickness","2"],["Flange","5"],["HookSize","4.50"],["Hooks","9"]];
let html = "";
for (let r = 1; r <= 15; r++) {
  const [name, value] = cells[r - 1] || ["", ""];
  html += `<tr><th>${r}</th><td>${name}</td><td class="${value ? "val" : ""}">${value}</td>${"<td></td>".repeat(7)}</tr>`;
}
document.getElementById("rows").innerHTML = html;
</script>
</body>
</html>
